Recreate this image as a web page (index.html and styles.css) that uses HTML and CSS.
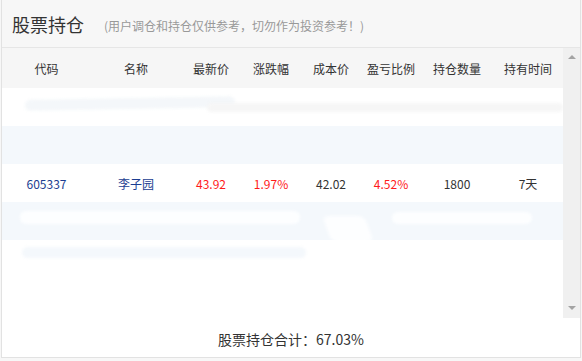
FILE: index.html
```html
<!DOCTYPE html>
<html lang="zh-CN">
<head>
<meta charset="utf-8">
<title>股票持仓</title>
<link rel="stylesheet" href="styles.css">
</head>
<body>
<div class="panel">
  <div class="title-bar">
    <span class="title">股票持仓</span>
    <span class="subtitle">(用户调仓和持仓仅供参考，切勿作为投资参考！)</span>
  </div>
  <div class="table-wrap">
    <div class="table">
      <div class="row head">
        <span>代码</span><span>名称</span><span>最新价</span><span>涨跌幅</span><span>成本价</span><span>盈亏比例</span><span>持仓数量</span><span>持有时间</span>
      </div>
      <div class="body">
        <div class="row blank"><div class="smear smear-a"></div><div class="smear smear-b"></div></div>
        <div class="row blank alt"></div>
        <div class="row">
          <span class="blue">605337</span><span class="blue">李子园</span><span class="red">43.92</span><span class="red">1.97%</span><span>42.02</span><span class="red">4.52%</span><span>1800</span><span>7天</span>
        </div>
        <div class="row blank alt"><div class="smear smear-c"></div><div class="smear smear-d"></div><div class="smear smear-e"></div></div>
        <div class="row blank"><div class="smear smear-f"></div></div>
      </div>
    </div>
    <div class="scrollbar">
      <span class="arrow up"></span>
      <span class="arrow down"></span>
    </div>
  </div>
  <div class="footer">股票持仓合计：67.03%</div>
</div>
</body>
</html>
```
FILE: styles.css
```css
html, body {
  margin: 0;
  padding: 0;
  background: #f7f7f7;
  font-family: "Noto Sans CJK SC", "Noto Sans", sans-serif;
  color: #333;
}
.panel {
  margin-left: 1px;
  width: 580px;
  height: 358px;
  box-sizing: border-box;
  border: 1px solid #e2e2e2;
  border-top: none;
  background: #fff;
  display: flex;
  flex-direction: column;
}
.title-bar {
  height: 48px;
  border-bottom: 1px solid #e6e6e6;
  background: #f7f7f7;
  display: flex;
  align-items: center;
  padding-left: 10px;
  padding-top: 1px;
  box-sizing: border-box;
}
.title {
  font-size: 18px;
  color: #333;
  line-height: 1;
}
.subtitle {
  font-size: 12px;
  color: #999;
  margin-left: 20px;
  padding-top: 2px;
}
.table-wrap {
  height: 270px;
  display: flex;
  overflow: hidden;
}
.table {
  width: 561px;
  display: flex;
  flex-direction: column;
}
.row {
  display: grid;
  grid-template-columns: 89px 90px 60px 60px 60px 60px 72px 70px;
  height: 38px;
  align-items: center;
  font-size: 12px;
  position: relative;
  overflow: hidden;
}
.row > span {
  text-align: center;
  white-space: nowrap;
}
.row.head {
  height: 40px;
  background: #f6f6f6;
  color: #333;
}
.row.alt {
  background: #f4f8fc;
}
.body {
  height: 230px;
  overflow: hidden;
}
.blue { color: #1b3d91; }
.red { color: #ff1a1a; }
.smear {
  position: absolute;
  border-radius: 6px;
  filter: blur(1.5px);
}
.smear-a { left: 23px; top: 10px; width: 210px; height: 11px; background: #f4f7fa; transform: rotate(-1deg); }
.smear-b { left: 205px; top: 15px; width: 356px; height: 9px; background: #f6f6f6; }
.smear-c { left: 18px; top: 9px; width: 280px; height: 13px; background: #fdfeff; }
.smear-d { left: 390px; top: 10px; width: 140px; height: 12px; background: #fdfeff; }
.smear-e { left: 325px; top: 14px; width: 42px; height: 26px; background: #fdfeff; transform: skewX(20deg); }
.smear-f { left: 20px; top: 7px; width: 284px; height: 11px; background: #f4f8fc; }
.scrollbar {
  width: 17px;
  background: #f0f0f0;
  display: flex;
  flex-direction: column;
  justify-content: space-between;
  align-items: center;
  padding: 7px 0 8px;
  box-sizing: border-box;
}
.arrow {
  width: 0;
  height: 0;
  border-left: 4px solid transparent;
  border-right: 4px solid transparent;
}
.arrow.up { border-bottom: 4px solid #a3a3a3; }
.arrow.down { border-top: 4px solid #a3a3a3; }
.footer {
  flex: 1;
  display: flex;
  align-items: center;
  justify-content: center;
  font-size: 14px;
  color: #333;
  padding-top: 2px;
}
```
